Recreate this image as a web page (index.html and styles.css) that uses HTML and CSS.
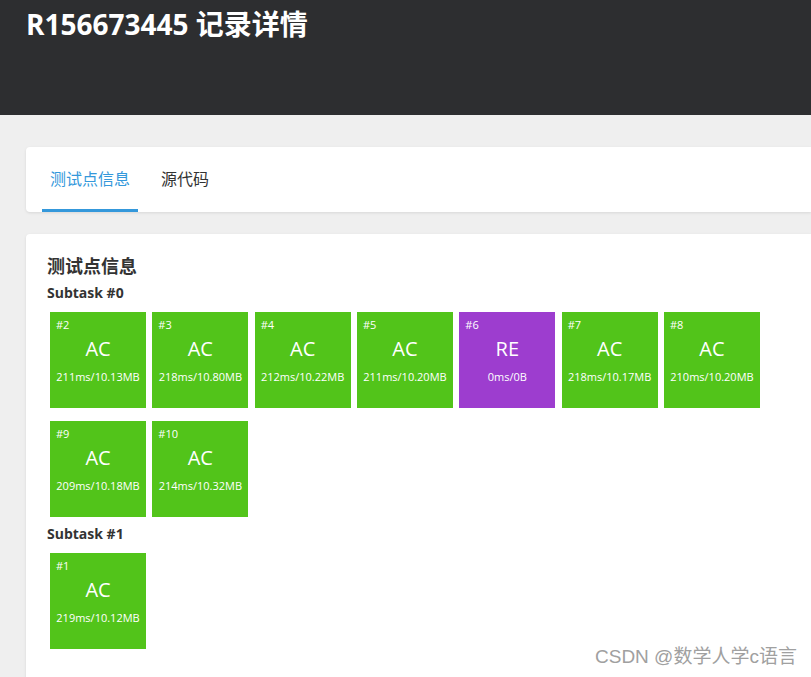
FILE: index.html
```html
<!DOCTYPE html>
<html lang="zh">
<head>
<meta charset="utf-8">
<link rel="stylesheet" href="styles.css">
</head>
<body>
<header class="header">
  <h1 class="title">R156673445 记录详情</h1>
</header>
<main class="main">
  <div class="card tabs">
    <div class="tab active">测试点信息</div>
    <div class="tab">源代码</div>
  </div>
  <div class="card content">
    <h2 class="heading">测试点信息</h2>
    <div class="subtask">Subtask #0</div>
    <div class="cases">
      <div class="case ac"><span class="id">#2</span><span class="st">AC</span><span class="info">211ms/10.13MB</span></div>
      <div class="case ac"><span class="id">#3</span><span class="st">AC</span><span class="info">218ms/10.80MB</span></div>
      <div class="case ac"><span class="id">#4</span><span class="st">AC</span><span class="info">212ms/10.22MB</span></div>
      <div class="case ac"><span class="id">#5</span><span class="st">AC</span><span class="info">211ms/10.20MB</span></div>
      <div class="case re"><span class="id">#6</span><span class="st">RE</span><span class="info">0ms/0B</span></div>
      <div class="case ac"><span class="id">#7</span><span class="st">AC</span><span class="info">218ms/10.17MB</span></div>
      <div class="case ac"><span class="id">#8</span><span class="st">AC</span><span class="info">210ms/10.20MB</span></div>
      <div class="case ac"><span class="id">#9</span><span class="st">AC</span><span class="info">209ms/10.18MB</span></div>
      <div class="case ac"><span class="id">#10</span><span class="st">AC</span><span class="info">214ms/10.32MB</span></div>
    </div>
    <div class="subtask">Subtask #1</div>
    <div class="cases">
      <div class="case ac"><span class="id">#1</span><span class="st">AC</span><span class="info">219ms/10.12MB</span></div>
    </div>
  </div>
</main>
<div class="watermark">CSDN @数学人学c语言</div>
</body>
</html>
```

FILE: styles.css
```css
html, body {
  margin: 0;
  padding: 0;
}
body {
  background: #efefef;
  font-family: "Open Sans", "Noto Sans CJK SC", sans-serif;
  color: #333;
  width: 811px;
  height: 677px;
  overflow: hidden;
  position: relative;
}
.header {
  background: #2d2e30;
  height: 115px;
  padding: 0 26px;
  box-sizing: border-box;
}
.title {
  margin: 0;
  padding-top: 5px;
  font-size: 28px;
  line-height: 38px;
  font-weight: 700;
  color: #fff;
}
.main {
  padding: 32px 0 0 26px;
  display: flex;
  flex-direction: column;
  gap: 22px;
}
.card {
  background: #fff;
  border-radius: 4px 0 0 4px;
  box-shadow: 0 1px 3px rgba(0, 0, 0, 0.1);
}
.tabs {
  height: 65px;
  display: flex;
  gap: 15px;
  padding-left: 16px;
  box-sizing: border-box;
}
.tab {
  padding: 0 8px;
  font-size: 16px;
  line-height: 65px;
  color: #333;
  box-sizing: border-box;
}
.tab.active {
  color: #3498db;
  border-bottom: 3px solid #3498db;
  line-height: 64px;
}
.content {
  padding: 20px 21px 20px;
  height: 420px;
}
.heading {
  margin: 0;
  font-size: 18px;
  line-height: 24px;
  font-weight: 700;
  color: #333;
}
.subtask {
  font-size: 14px;
  line-height: 20px;
  font-weight: 700;
  color: #333;
  margin-top: 5px;
}
.cases {
  display: flex;
  flex-wrap: wrap;
  column-gap: 6.33px;
  row-gap: 13px;
  padding: 9px 0 2px 3px;
  width: 740px;
}
.case {
  width: 96px;
  height: 96px;
  color: #fff;
  display: flex;
  flex-direction: column;
  align-items: center;
}
.case.ac { background: #52c41a; }
.case.re { background: #9d3dcf; }
.id {
  align-self: flex-start;
  font-size: 11px;
  line-height: 14px;
  margin: 6px 0 0 6px;
}
.st {
  font-size: 20px;
  line-height: 26px;
  margin-top: 4px;
}
.info {
  font-size: 11px;
  line-height: 14px;
  margin-top: 8px;
  white-space: nowrap;
}
.watermark {
  position: absolute;
  left: 595px;
  top: 644px;
  font-family: "Liberation Sans", "Noto Sans CJK SC", sans-serif;
  font-size: 19px;
  line-height: 26px;
  color: #a0a0a0;
}
```
